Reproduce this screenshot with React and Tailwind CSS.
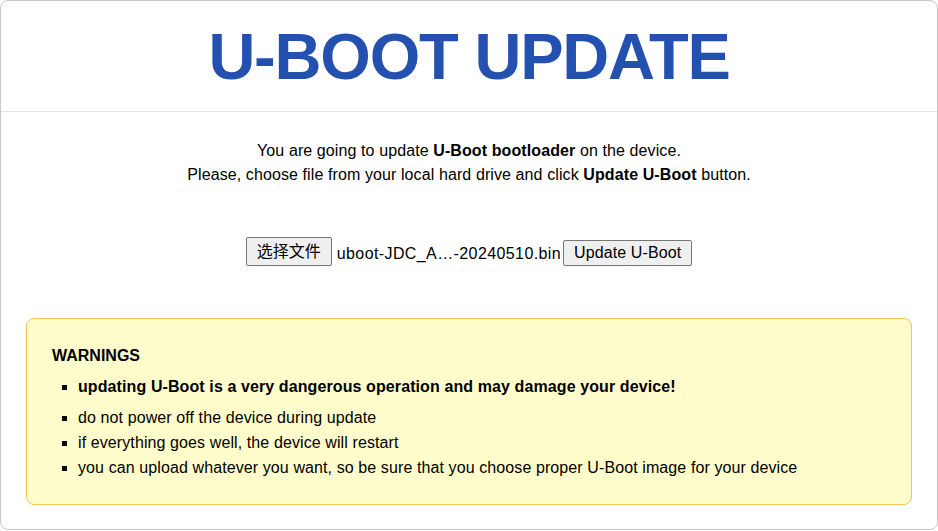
import React from 'react';

const items = [
  'do not power off the device during update',
  'if everything goes well, the device will restart',
  'you can upload whatever you want, so be sure that you choose proper U-Boot image for your device',
];

export default function App() {
  return (
    <div className="min-h-screen bg-white font-['Liberation_Sans',Arial,sans-serif] text-black">
      <div className="h-[530px] rounded-lg border border-[#c8c8c8] bg-white">
        <header className="flex h-[111px] items-center justify-center border-b border-[#e3e3e3]">
          <h1 className="text-[65px] font-bold leading-none tracking-[-1.2px] text-[#2451b0]">U-BOOT UPDATE</h1>
        </header>

        <div className="mt-[27px] text-center text-base leading-6 tracking-[0.1px]">
          <p>
            You are going to update <b>U-Boot bootloader</b> on the device.
          </p>
          <p>
            Please, choose file from your local hard drive and click <b>Update U-Boot</b> button.
          </p>
        </div>

        <form className="mt-[50px] flex items-end justify-center">
          <button
            type="button"
            className="h-[29px] rounded-[2px] border border-[#767676] bg-[#efefef] px-[10px] font-['Liberation_Sans','Noto_Sans_CJK_SC',sans-serif] text-base leading-none"
          >
            选择文件
          </button>
          <span className="mb-[4px] ml-[5px] text-base leading-none tracking-[0.4px]">uboot-JDC_A…-20240510.bin</span>
          <button
            type="button"
            className="ml-[2px] h-[26px] rounded-[2px] border border-[#767676] bg-[#efefef] px-[10px] text-base leading-none tracking-[0.1px]"
          >
            Update U-Boot
          </button>
        </form>

        <div className="mx-[25px] mt-[52px] rounded-lg border border-[#f6c453] bg-[#fffccc] px-[25px] pb-[24px] pt-[25px] text-base leading-6">
          <strong>WARNINGS</strong>
          <ul className="mt-[6px] list-[square] pl-[26px] leading-[25px] tracking-[0.1px]">
            <li className="mb-[6px] font-bold">updating U-Boot is a very dangerous operation and may damage your device!</li>
            {items.map((item) => (
              <li key={item}>{item}</li>
            ))}
          </ul>
        </div>
      </div>
    </div>
  );
}
